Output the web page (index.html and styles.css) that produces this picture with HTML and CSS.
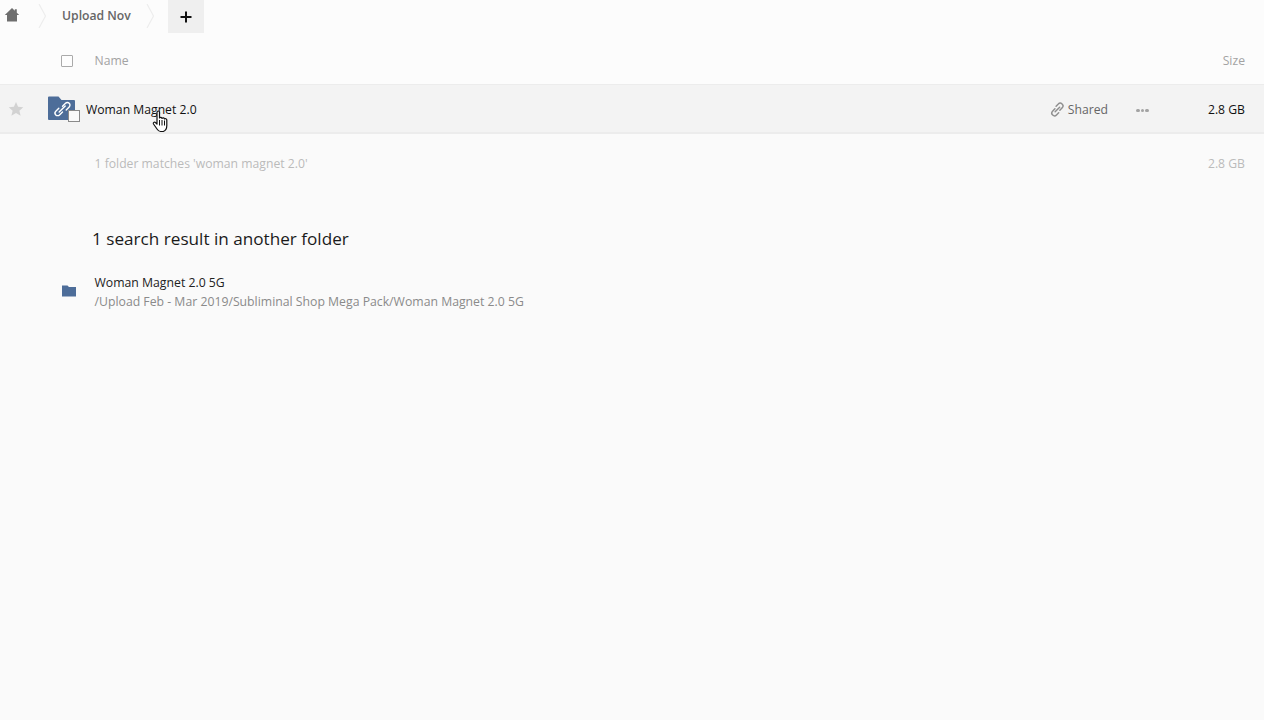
FILE: index.html
```html
<!DOCTYPE html>
<html lang="en">
<head>
<meta charset="utf-8">
<title>Files</title>
<link rel="stylesheet" href="styles.css">
</head>
<body>
<nav class="crumbs">
  <svg class="home" width="16" height="16" viewBox="0 0 16 16"><path fill="#6e6e6e" d="M8 1 .8 8H3v6.500h10V8h2.200L12.800 5.700V2.200h-2v1.600z"/></svg>
  <svg class="chev chev-a" width="9" height="24" viewBox="0 0 9 24"><path fill="none" stroke="#ededed" stroke-width="1.200" d="M1 0l6.500 12L1 24"/></svg>
  <span class="crumb">Upload Nov</span>
  <svg class="chev chev-b" width="9" height="24" viewBox="0 0 9 24"><path fill="none" stroke="#ededed" stroke-width="1.200" d="M1 0l6.500 12L1 24"/></svg>
  <button class="add"><svg width="12" height="12" viewBox="0 0 12 12"><path fill="none" stroke="#111" stroke-width="2" d="M6 .5v11M.5 6h11"/></svg></button>
</nav>

<div class="head">
  <span class="check"></span>
  <span class="head-name">Name</span>
  <span class="head-size">Size</span>
</div>

<div class="row">
  <svg class="star" width="16" height="16" viewBox="0 0 16 16"><path fill="#d2d2d2" d="M8 1l2.100 4.800 5.200.5-3.900 3.400 1.200 5.100L8 12.100l-4.600 2.700 1.200-5.100L.700 6.300l5.200-.5z"/></svg>
  <span class="thumb">
    <svg width="34" height="27" viewBox="0 0 34 27">
      <path fill="#4d6d99" d="M1 1.500a1 1 0 0 1 1-1h9.500l3 3.500H27a1 1 0 0 1 1 1v18a1 1 0 0 1-1 1H2a1 1 0 0 1-1-1z"/>
      <g fill="none" stroke="#fff" stroke-width="1.400" stroke-linecap="round">
        <path d="M11.800 12.200l-3 3a2.600 2.600 0 0 0 3.700 3.700l3-3"/>
        <path d="M15.500 10.200l3-3a2.600 2.600 0 0 1 3.700 3.700l-3 3"/>
        <path d="M12.200 15.900l6-6"/>
      </g>
      <rect class="thumb-box" x="21.500" y="14.500" width="11" height="11"/>
    </svg>
  </span>
  <span class="row-name">Woman Magnet 2.0</span>
  <svg class="cursor" width="18" height="23" viewBox="0 0 18 23"><path fill="#fff" stroke="#111" stroke-width="1.200" stroke-linejoin="round" d="M5 2.200c0-1.600 2.500-1.600 2.500 0V8c.6-.8 2.300-.8 2.500.4.600-.8 2.300-.7 2.500.6.700-.6 2.300-.3 2.300 1V15.500c0 3-1.500 5.200-3.500 6H8.500C6.800 21.500 6 20.500 5 19L1.500 14c-.8-1.300.9-2.600 1.900-1.500L5 14z"/><path stroke="#111" stroke-width="1" d="M7.500 10v5.500M10 10v5.500M12.500 10.500v5"/></svg>
  <span class="share">
    <svg width="15" height="15" viewBox="0 0 15 15"><g fill="none" stroke="#8f8f8f" stroke-width="1.500" stroke-linecap="round"><path d="M6.200 4.200 8.400 2a2.700 2.700 0 0 1 4 3.700L10 8.200"/><path d="M8.800 10.800l-2.200 2.200a2.700 2.700 0 0 1-4-3.700L5 6.800"/><path d="M5.200 9.800l4.600-4.600"/></g></svg>
    Shared
  </span>
  <span class="dots"><i></i><i></i><i></i></span>
  <span class="row-size">2.8 GB</span>
</div>

<div class="summary">
  <span>1 folder matches 'woman magnet 2.0'</span>
  <span>2.8 GB</span>
</div>

<h2 class="other">1 search result in another folder</h2>

<div class="result">
  <svg width="14" height="12" viewBox="0 0 14 12"><path fill="#4d6d99" d="M0 .5h5.500L7 2h7v9.500H0z"/></svg>
  <div class="result-text">
    <div class="result-name">Woman Magnet 2.0 5G</div>
    <div class="result-path">/Upload Feb - Mar 2019/Subliminal Shop Mega Pack/Woman Magnet 2.0 5G</div>
  </div>
</div>
</body>
</html>
```
FILE: styles.css
```css
* { box-sizing: border-box; }
html, body { height: 100%; }
body {
  margin: 0;
  background: #fafafa;
  color: #111;
  font: 12.2px/18px "Open Sans", "Liberation Sans", sans-serif;
  overflow: hidden;
}
.crumbs {
  display: flex;
  align-items: flex-start;
  height: 40px;
  background: #fcfcfc;
  overflow: hidden;
}
.home { margin: 7px 0 0 4px; flex: none; }
.chev { flex: none; margin-top: 4px; }
.chev-a { margin-left: 18px; }
.crumb {
  margin: 7px 0 0 15px;
  width: 69px;
  white-space: nowrap;
  font-weight: 600;
  color: #666;
}
.chev-b { margin-left: 15px; }
.add {
  margin-left: 13px;
  width: 36px;
  height: 33px;
  padding: 1px 0 0;
  border: 0;
  background: #efefef;
  display: flex;
  align-items: center;
  justify-content: center;
}
.head {
  display: flex;
  align-items: center;
  height: 45px;
  padding: 0 19px 2px 61px;
  background: #fcfcfc;
  border-bottom: 1px solid #ececec;
  color: #a3a3a3;
}
.check {
  width: 12px;
  height: 12px;
  margin-top: -1px;
  border: 1px solid #aaa;
  background: #fdfdfd;
  border-radius: 1px;
}
.head-name { margin-left: 21.500px; flex: 1; }
.row {
  position: relative;
  display: flex;
  align-items: center;
  height: 49px;
  padding: 2px 19px 0 8px;
  background: #f3f3f3;
  border-bottom: 2px solid #ececec;
}
.star { flex: none; margin-top: -2px; }
.thumb { flex: none; display: flex; margin: 0 0 0 23px; width: 39px; height: 27px; }
.thumb-box { fill: #fafafa; stroke: #8a8a8a; stroke-width: 1; }
.row-name { flex: 1; white-space: nowrap; color: #111; }
.cursor { position: absolute; left: 152px; top: 25px; }
.share { display: flex; align-items: center; gap: 3px; color: #666; width: 58px; margin-right: 28px; white-space: nowrap; }
.dots { display: flex; gap: 1px; width: 14px; margin-right: 57px; padding-top: 2px; }
.dots i { width: 3.500px; height: 3.500px; border-radius: 50%; background: #a3a3a3; }
.row-size { width: 38px; text-align: right; white-space: nowrap; }
.summary {
  display: flex;
  justify-content: space-between;
  padding: 21px 19px 0 94.500px;
  color: #bbb;
}
.other {
  margin: 54px 0 0 92px;
  font-size: 17.150px;
  line-height: 24px;
  font-weight: 400;
  color: #1a1a1a;
}
.result {
  display: flex;
  align-items: center;
  margin: 22px 0 0 62px;
  gap: 18.500px;
}
.result svg { flex: none; margin-top: -2px; }
.result-name { font-size: 12.250px; line-height: 19px; color: #222; }
.result-path { font-size: 12.250px; line-height: 19px; color: #8a8a8a; white-space: nowrap; }
```
